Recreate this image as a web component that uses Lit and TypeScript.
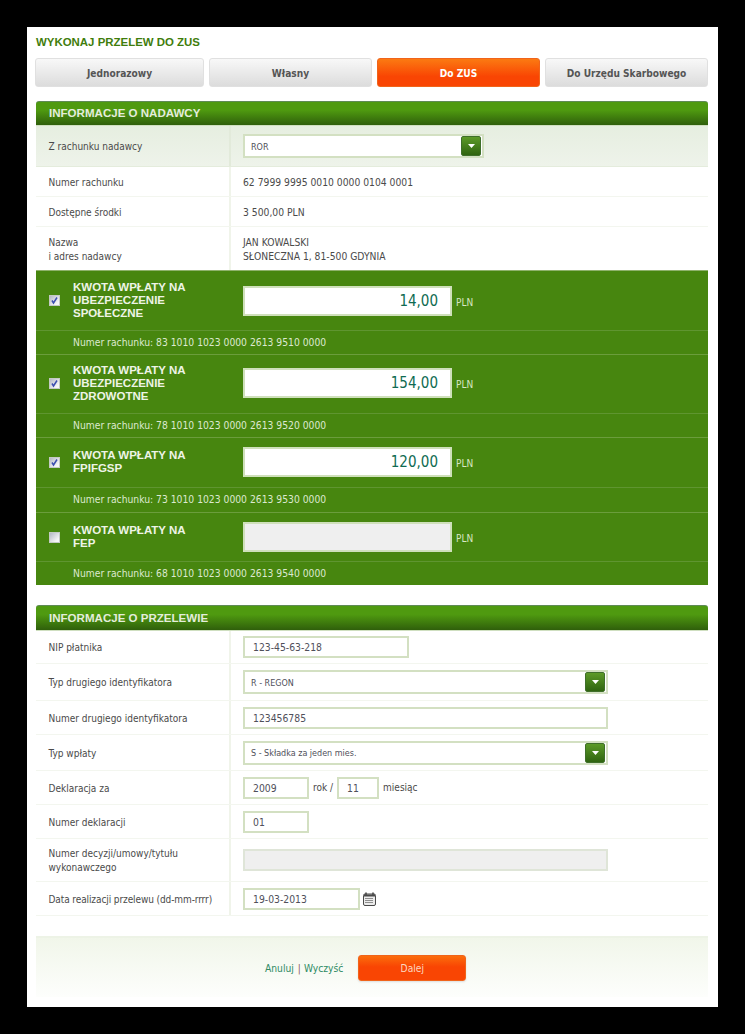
import { LitElement, html, css } from "lit";
import { customElement } from "lit/decorators.js";

const arrowBtn = html`<span class="sel-btn"><svg width="7" height="4" viewBox="0 0 7 4"><path d="M0 0h7L3.5 4z" fill="#fff"/></svg></span>`;

const amounts = [
  { h: 60, ah: 24, lift: "", on: true, lines: ["KWOTA WPŁATY NA", "UBEZPIECZENIE", "SPOŁECZNE"], value: "14,00", acct: "83 1010 1023 0000 2613 9510 0000" },
  { h: 59, ah: 24, lift: "lift2", on: true, lines: ["KWOTA WPŁATY NA", "UBEZPIECZENIE", "ZDROWOTNE"], value: "154,00", acct: "78 1010 1023 0000 2613 9520 0000" },
  { h: 50, ah: 25, lift: "lift1", on: true, lines: ["KWOTA WPŁATY NA", "FPIFGSP"], value: "120,00", acct: "73 1010 1023 0000 2613 9530 0000" },
  { h: 49, ah: 24, lift: "", on: false, lines: ["KWOTA WPŁATY NA", "FEP"], value: "", acct: "68 1010 1023 0000 2613 9540 0000" },
];

@customElement("app-root")
export class AppRoot extends LitElement {
  static styles = css`
    :host { display: block; background: #000; min-height: 1034px; padding: 27px; box-sizing: border-box; font-family: "DejaVu Sans Condensed", "DejaVu Sans", sans-serif; font-size: 10px; color: #4a4a4a; }
    .panel { width: 691px; height: 980px; background: #fff; padding: 0 10px 10px 9px; box-sizing: border-box; display: flex; flex-direction: column; }
    h1 { margin: 0; height: 31px; padding-top: 8px; box-sizing: border-box; font: bold 11.45px/14px "Liberation Sans", sans-serif; color: #3f7d0c; }
    .tabs { display: flex; gap: 5px; margin-left: -1px; height: 29px; }
    .tab { flex: 0 0 163px; display: flex; align-items: center; justify-content: center; box-sizing: border-box; border: 1px solid #e0e0e0; border-radius: 3px; background: linear-gradient(#f8f8f8, #dcdcdc); font-weight: bold; font-size: 10.1px; color: #555; padding-top: 1px; }
    .tab:first-child { flex-basis: 169px; }
    .tab.on { background: linear-gradient(#fb7a12, #f94503 65%); border-color: #f0641a; color: #fff; }
    .head { height: 24px; margin-top: 14px; border-top: 1px solid #5f8a55; border-radius: 3px 3px 0 0; box-sizing: border-box; background: linear-gradient(#4f9a10 35%, #2f5f0b); color: #e4eddc; font: bold 11.55px/23px "Liberation Sans", sans-serif; padding-left: 13px; }
    .head.two { margin-top: 20px; height: 25px; line-height: 25px; }
    .under { height: 1px; background: #cfdfc0; }
    .row { display: grid; grid-template-columns: 195px 1fr; border-bottom: 1px solid #f3f6ef; box-sizing: border-box; }
    .row > .l { padding: 2px 0 0 12.5px; display: flex; flex-direction: column; justify-content: center; line-height: 14px; border-right: 2px solid #f0f4ea; }
    .row > .r { padding-left: 12px; display: flex; align-items: center; gap: 4px; line-height: 14px; font-size: 10.25px; }
    .r.cal { gap: 3px; }
    .tight { letter-spacing: -0.1px; }
    .stack { display: block; }
    .top { background: linear-gradient(#e6eee0, #eef3ea); border-bottom: 1px solid #e4ecdc; }
    .top > .l { border-right-color: #e2eada; }
    .green { background: #47860f; color: #fff; }
    .amt { display: flex; align-items: center; border-top: 1px solid #6b9d3c; box-sizing: border-box; }
    .amt.first { border-top-color: #8fb26c; }
    .lift2 { padding-bottom: 2px; }
    .lift1 { padding-bottom: 1px; }
    .cb { margin-left: 13px; width: 11px; height: 11px; box-sizing: border-box; display: flex; flex: none; align-items: center; justify-content: center; border: 1px solid #c4cac4; background: linear-gradient(135deg, #b4b8c4, #f6f6f6 80%); }
    .lbl { margin-left: 13px; width: 170px; font: bold 11.5px/13px "Liberation Sans", sans-serif; color: #eef4e6; }
    .amount { width: 209px; height: 30px; box-sizing: border-box; border: 2px solid #cfe0bb; background: #fff; color: #0f6b52; font-size: 15px; text-align: right; padding-right: 12px; line-height: 27px; }
    .amount.off { background: #efefef; }
    .pln { margin-left: 4px; padding-top: 3px; color: #d7e6c4; }
    .acct { border-top: 1px solid #5f9530; box-sizing: border-box; padding-left: 37px; line-height: 23px; color: #dde9cf; font-size: 10.25px; }
    .field { box-sizing: border-box; height: 22px; border: 2px solid #d3e0c2; background: #fff; padding-left: 8px; line-height: 18px; font-size: 10.3px; color: #4f4f5a; }
    .field.grey { background: #efefef; border-color: #dfe5d8; }
    .w166 { width: 166px; } .w365 { width: 365px; } .w66 { width: 66px; } .w42 { width: 42px; } .w117 { width: 117px; }
    .sel { box-sizing: border-box; height: 24px; border: 2px solid #d3e0c2; background: #fff; display: flex; align-items: center; justify-content: space-between; padding: 0 1px 0 6px; color: #4f4f5a; font-size: 8.95px; }
    .sel > span:first-child { padding-top: 1px; }
    .w241 { width: 241px; }
    .sel-btn { width: 20px; height: 20px; box-sizing: border-box; border-radius: 2px; border: 1px solid #3f6f2a; background: linear-gradient(#5c9a28, #2f6410); display: flex; align-items: center; justify-content: center; }
    .small { font-size: 10px; }
    .footer { margin-top: 20px; height: 61px; border-top: 2px solid #edf3e6; box-sizing: border-box; background: linear-gradient(#f1f6ea, #fdfefc); display: flex; align-items: center; padding-left: 229px; padding-top: 1px; font-size: 10.2px; }
    a { color: #2e8a63; text-decoration: none; }
    .sep { color: #8a5a5a; margin: 0 3px 0 4px; }
    .btn { margin-left: 15px; width: 108px; height: 26px; box-sizing: border-box; border: 1px solid #f0641a; border-radius: 3px; background: linear-gradient(#fb6d0c, #f94503 45%); color: #fbd8c0; display: flex; align-items: center; justify-content: center; box-shadow: 0 1px 2px #ddd; }
  `;

  row(h: number, label: unknown, right: unknown, cls = "", rcls = "") {
    return html`<div class="row ${cls}" style="height:${h}px"><div class="l">${label}</div><div class="r ${rcls}">${right}</div></div>`;
  }

  render() {
    return html`<div class="panel">
      <h1>WYKONAJ PRZELEW DO ZUS</h1>
      <div class="tabs">
        <div class="tab">Jednorazowy</div><div class="tab">Własny</div><div class="tab on">Do ZUS</div><div class="tab">Do Urzędu Skarbowego</div>
      </div>
      <div class="head">INFORMACJE O NADAWCY</div><div class="under"></div>
      ${this.row(41, "Z rachunku nadawcy", html`<div class="sel w241"><span>ROR</span>${arrowBtn}</div>`, "top")}
      ${this.row(30, "Numer rachunku", "62 7999 9995 0010 0000 0104 0001")}
      ${this.row(30, "Dostępne środki", "3 500,00 PLN")}
      <div class="row" style="height:43px;border:0"><div class="l"><span>Nazwa</span><span>i adres nadawcy</span></div><div class="r"><div class="stack">JAN KOWALSKI<br />SŁONECZNA 1, 81-500 GDYNIA</div></div></div>
      <div class="green">
        ${amounts.map((a, i) => html`
          <div class="amt ${i === 0 ? "first" : ""} ${a.lift}" style="height:${a.h}px">
            <span class="cb">${a.on ? html`<svg width="9" height="9" viewBox="0 0 9 9"><path d="M2 4.5l1.5 2.5L7 1.5" fill="none" stroke="#3c4fb0" stroke-width="1.5"/></svg>` : ""}</span>
            <div class="lbl">${a.lines.map((t) => html`${t}<br />`)}</div>
            <div class="amount ${a.on ? "" : "off"}">${a.value}</div>
            <span class="pln">PLN</span>
          </div>
          <div class="acct" style="height:${a.ah}px">Numer rachunku: ${a.acct}</div>`)}
      </div>
      <div class="head two">INFORMACJE O PRZELEWIE</div><div class="under"></div>
      ${this.row(33, "NIP płatnika", html`<div class="field w166">123-45-63-218</div>`)}
      ${this.row(37, "Typ drugiego identyfikatora", html`<div class="sel w365"><span>R - REGON</span>${arrowBtn}</div>`)}
      ${this.row(34, "Numer drugiego identyfikatora", html`<div class="field w365">123456785</div>`)}
      ${this.row(36, "Typ wpłaty", html`<div class="sel w365"><span>S - Składka za jeden mies.</span>${arrowBtn}</div>`)}
      ${this.row(34, "Deklaracja za", html`<div class="field w66">2009</div><span class="small">rok /</span><div class="field w42">11</div><span class="small">miesiąc</span>`)}
      ${this.row(34, "Numer deklaracji", html`<div class="field w66">01</div>`)}
      <div class="row" style="height:43px"><div class="l"><span>Numer decyzji/umowy/tytułu</span><span>wykonawczego</span></div><div class="r"><div class="field grey w365"></div></div></div>
      ${this.row(34, html`<span class="tight">Data realizacji przelewu (dd-mm-rrrr)</span>`, html`<div class="field w117">19-03-2013</div>
        <svg width="13" height="14" viewBox="0 0 13 14"><rect x="0.5" y="2" width="12" height="11.5" rx="1.5" fill="#ececec" stroke="#4a4a4a"/><rect x="1" y="2.5" width="11" height="2" fill="#4a4a4a"/><path d="M3 0.5v3M10 0.5v3" stroke="#4a4a4a" stroke-width="1.6"/><path d="M2.5 6.5h8M2.5 8.5h8M2.5 10.5h8" stroke="#333" stroke-dasharray="1 1"/></svg>`, "", "cal")}
      <div class="footer"><a>Anuluj</a><span class="sep">|</span><a>Wyczyść</a><div class="btn">Dalej</div></div>
    </div>`;
  }
}
